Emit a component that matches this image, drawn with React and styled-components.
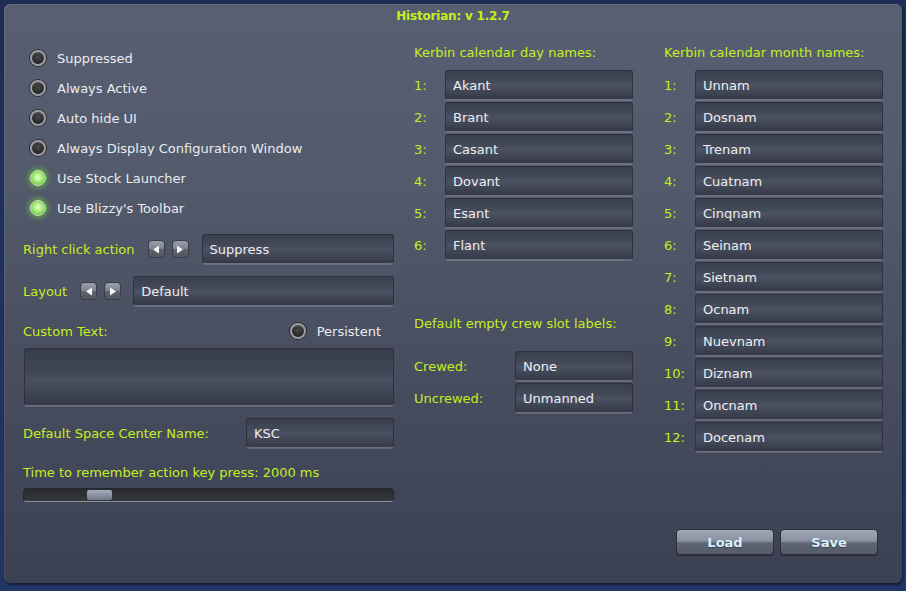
import React from 'react';
import styled, { createGlobalStyle, css } from 'styled-components';

const GlobalStyle = createGlobalStyle`
  html, body {
    margin: 0;
    padding: 0;
    background: linear-gradient(180deg, #1e2d55 0%, #213566 100%);
    width: 906px;
    height: 591px;
    overflow: hidden;
  }
  #root {
    font-family: "DejaVu Sans", "Liberation Sans", sans-serif;
  }
`;

const lime = '#c4ef1e';

const dayNames = ['Akant', 'Brant', 'Casant', 'Dovant', 'Esant', 'Flant'];
const monthNames = [
  'Unnam', 'Dosnam', 'Trenam', 'Cuatnam', 'Cinqnam', 'Seinam',
  'Sietnam', 'Ocnam', 'Nuevnam', 'Diznam', 'Oncnam', 'Docenam',
];

const toggles = [
  { label: 'Suppressed', on: false },
  { label: 'Always Active', on: false },
  { label: 'Auto hide UI', on: false },
  { label: 'Always Display Configuration Window', on: false },
  { label: 'Use Stock Launcher', on: true },
  { label: "Use Blizzy's Toolbar", on: true },
];

const Arrow = ({ dir }) => (
  <ArrowButton>
    <svg width="8" height="9" viewBox="0 0 8 9">
      {dir === 'left'
        ? <polygon points="7,0.5 7,8.5 1,4.5" fill="#f4f6f8" />
        : <polygon points="1,0.5 1,8.5 7,4.5" fill="#f4f6f8" />}
    </svg>
  </ArrowButton>
);

const Toggle = ({ on, label }) => (
  <ToggleRow>
    <Lamp $on={on} />
    <ToggleText>{label}</ToggleText>
  </ToggleRow>
);

const App = () => {
  return (
    <>
      <GlobalStyle />
      <Window>
        <Title>Historian: v 1.2.7</Title>
        <Columns>
          <LeftColumn>
            <ToggleList>
              {toggles.map(t => <Toggle key={t.label} {...t} />)}
            </ToggleList>

            <ControlRow $mt={11}>
              <Label>Right click action</Label>
              <Arrows $ml={13}>
                <Arrow dir="left" />
                <Arrow dir="right" />
              </Arrows>
              <Field $grow $ml={13}>Suppress</Field>
            </ControlRow>

            <ControlRow $mt={12}>
              <Label>Layout</Label>
              <Arrows $ml={13}>
                <Arrow dir="left" />
                <Arrow dir="right" />
              </Arrows>
              <Field $grow $ml={12}>Default</Field>
            </ControlRow>

            <CustomRow>
              <Label>Custom Text:</Label>
              <Persistent>
                <Lamp $on={false} />
                <ToggleText>Persistent</ToggleText>
              </Persistent>
            </CustomRow>

            <TextArea />

            <ControlRow $mt={12}>
              <Label>Default Space Center Name:</Label>
              <Field $width={148} $ml="auto">KSC</Field>
            </ControlRow>

            <Label $block $mt={17}>Time to remember action key press: 2000 ms</Label>
            <Slider>
              <Thumb style={{ left: `${(2000 / 12000) * 100 + 0.4}%` }} />
            </Slider>
          </LeftColumn>

          <MiddleColumn>
            <Heading>Kerbin calendar day names:</Heading>
            <NameList>
              {dayNames.map((n, i) => (
                <NameRow key={n}>
                  <Label>{i + 1}:</Label>
                  <Field $width={188}>{n}</Field>
                </NameRow>
              ))}
            </NameList>

            <Heading $mt={56}>Default empty crew slot labels:</Heading>
            <NameList $mt={19}>
              <NameRow>
                <Label>Crewed:</Label>
                <Field $width={118}>None</Field>
              </NameRow>
              <NameRow>
                <Label>Uncrewed:</Label>
                <Field $width={118}>Unmanned</Field>
              </NameRow>
            </NameList>
          </MiddleColumn>

          <RightColumn>
            <Heading>Kerbin calendar month names:</Heading>
            <NameList>
              {monthNames.map((n, i) => (
                <NameRow key={n}>
                  <Label>{i + 1}:</Label>
                  <Field $width={188}>{n}</Field>
                </NameRow>
              ))}
            </NameList>
          </RightColumn>
        </Columns>

        <Footer>
          <Button>Load</Button>
          <Button>Save</Button>
        </Footer>
      </Window>
    </>
  );
};

export default App;

const Window = styled.div`
  position: relative;
  margin: 4px 0 0 4px;
  width: 898px;
  height: 579px;
  box-sizing: border-box;
  border-radius: 6px;
  background: linear-gradient(180deg, #585f72 0%, #535a6c 30%, #474d5f 65%, #3b4153 100%);
  box-shadow: inset 1px 1px 0 rgba(255, 255, 255, 0.08), 1px 2px 2px rgba(0, 0, 0, 0.45);
  display: flex;
  flex-direction: column;
`;

const Title = styled.div`
  height: 26px;
  padding-top: 5px;
  box-sizing: border-box;
  text-align: center;
  font-size: 12px;
  font-weight: bold;
  letter-spacing: -0.2px;
  color: ${lime};
`;

const Columns = styled.div`
  display: flex;
  padding-left: 19px;
`;

const LeftColumn = styled.div`
  width: 371px;
  display: flex;
  flex-direction: column;
`;

const MiddleColumn = styled.div`
  width: 219px;
  margin-left: 20px;
  padding-top: 15px;
  display: flex;
  flex-direction: column;
`;

const RightColumn = styled(MiddleColumn)`
  margin-left: 31px;
`;

const ToggleList = styled.div`
  display: flex;
  flex-direction: column;
  padding-top: 13px;
`;

const ToggleRow = styled.div`
  height: 30px;
  display: flex;
  align-items: center;
  padding-left: 7px;
`;

const Lamp = styled.span`
  width: 16px;
  height: 16px;
  border-radius: 50%;
  box-sizing: border-box;
  flex-shrink: 0;
  ${({ $on }) => $on
    ? css`
      border: 1px solid #cfe8c0;
      background: radial-gradient(circle at 50% 45%, #e6ffd0 0%, #b4f08a 35%, #6ccc3a 75%, #4a9a28 100%);
      box-shadow: 0 0 5px 2px rgba(110, 230, 60, 0.55);
    `
    : css`
      border: 2px solid #9a9c9f;
      background: radial-gradient(circle at 50% 40%, #4a4a4a 0%, #2a2a2a 60%, #161616 100%);
      box-shadow: 0 0 0 1px #2a2c30, inset 0 1px 1px rgba(255, 255, 255, 0.2);
    `}
`;

const ToggleText = styled.span`
  margin-left: 11px;
  font-size: 13px;
  color: #e9ecef;
  white-space: nowrap;
`;

const Label = styled.span`
  font-size: 13px;
  color: ${lime};
  white-space: nowrap;
  ${({ $block, $mt }) => $block && css`
    display: block;
    margin-top: ${$mt}px;
    line-height: 16px;
  `}
`;

const ControlRow = styled.div`
  display: flex;
  align-items: center;
  margin-top: ${({ $mt }) => $mt}px;
`;

const Arrows = styled.div`
  display: flex;
  gap: 7px;
  margin-left: ${({ $ml }) => $ml}px;
`;

const ArrowButton = styled.span`
  width: 17px;
  height: 18px;
  border-radius: 4px;
  box-sizing: border-box;
  border: 1px solid #3a3e48;
  background: linear-gradient(180deg, #9aa0ab 0%, #7d838f 48%, #5d626d 52%, #525762 100%);
  display: flex;
  align-items: center;
  justify-content: center;
`;

const fieldLook = css`
  box-sizing: border-box;
  border-radius: 3px;
  border: 1px solid #2e323d;
  border-bottom-color: #6b7180;
  background: linear-gradient(180deg, #3a3f4e 0%, #454a5a 40%, #4d5263 50%, #3e4352 80%, #343847 100%);
  box-shadow: 0 1px 0 rgba(150, 158, 175, 0.35);
`;

const Field = styled.div`
  ${fieldLook};
  height: 30px;
  display: flex;
  align-items: center;
  padding-left: 7px;
  font-size: 13px;
  color: #eceef0;
  white-space: nowrap;
  ${({ $grow }) => $grow && css`flex: 1;`}
  ${({ $width }) => $width && css`width: ${$width}px; flex-shrink: 0;`}
  margin-left: ${({ $ml }) => (typeof $ml === 'number' ? `${$ml}px` : $ml || 0)};
`;

const CustomRow = styled.div`
  display: flex;
  align-items: center;
  justify-content: space-between;
  margin-top: 15px;
  height: 20px;
`;

const Persistent = styled.div`
  display: flex;
  align-items: center;
  margin-right: 13px;

  ${ToggleText} {
    margin-left: 11px;
  }
`;

const TextArea = styled.div`
  ${fieldLook};
  margin-top: 7px;
  margin-left: 1px;
  height: 58px;
  background: linear-gradient(180deg, #383d4b 0%, #424757 45%, #4a4f60 55%, #3c4150 85%, #343846 100%);
`;

const Slider = styled.div`
  position: relative;
  margin-top: 7px;
  height: 14px;
  border-radius: 4px;
  box-sizing: border-box;
  border: 1px solid #24262b;
  border-bottom-color: #8a8f99;
  background: linear-gradient(180deg, #2a2b2f 0%, #36373b 100%);
`;

const Thumb = styled.span`
  position: absolute;
  top: 1px;
  width: 25px;
  height: 10px;
  border-radius: 2px;
  background: linear-gradient(180deg, #a4abb9 0%, #8c93a3 50%, #6f7686 100%);
`;

const Heading = styled.div`
  font-size: 13px;
  color: ${lime};
  line-height: 16px;
  white-space: nowrap;
  margin-top: ${({ $mt }) => $mt || 0}px;
`;

const NameList = styled.div`
  display: flex;
  flex-direction: column;
  gap: 2px;
  margin-top: ${({ $mt }) => $mt || 9}px;
`;

const NameRow = styled.div`
  display: flex;
  align-items: center;
  justify-content: space-between;
`;

const Footer = styled.div`
  margin-top: auto;
  display: flex;
  justify-content: flex-end;
  gap: 6px;
  padding: 0 24px 28px 0;
`;

const Button = styled.div`
  width: 98px;
  height: 26px;
  box-sizing: border-box;
  border-radius: 4px;
  border: 1px solid #2d313b;
  background: linear-gradient(180deg, #a0a7b5 0%, #8a91a0 45%, #5f6574 55%, #565b69 100%);
  box-shadow: 0 1px 1px rgba(0, 0, 0, 0.4);
  display: flex;
  align-items: center;
  justify-content: center;
  font-size: 13px;
  font-weight: bold;
  color: #d9f1ff;
  text-shadow: 0 1px 1px rgba(0, 0, 0, 0.35);
`;
